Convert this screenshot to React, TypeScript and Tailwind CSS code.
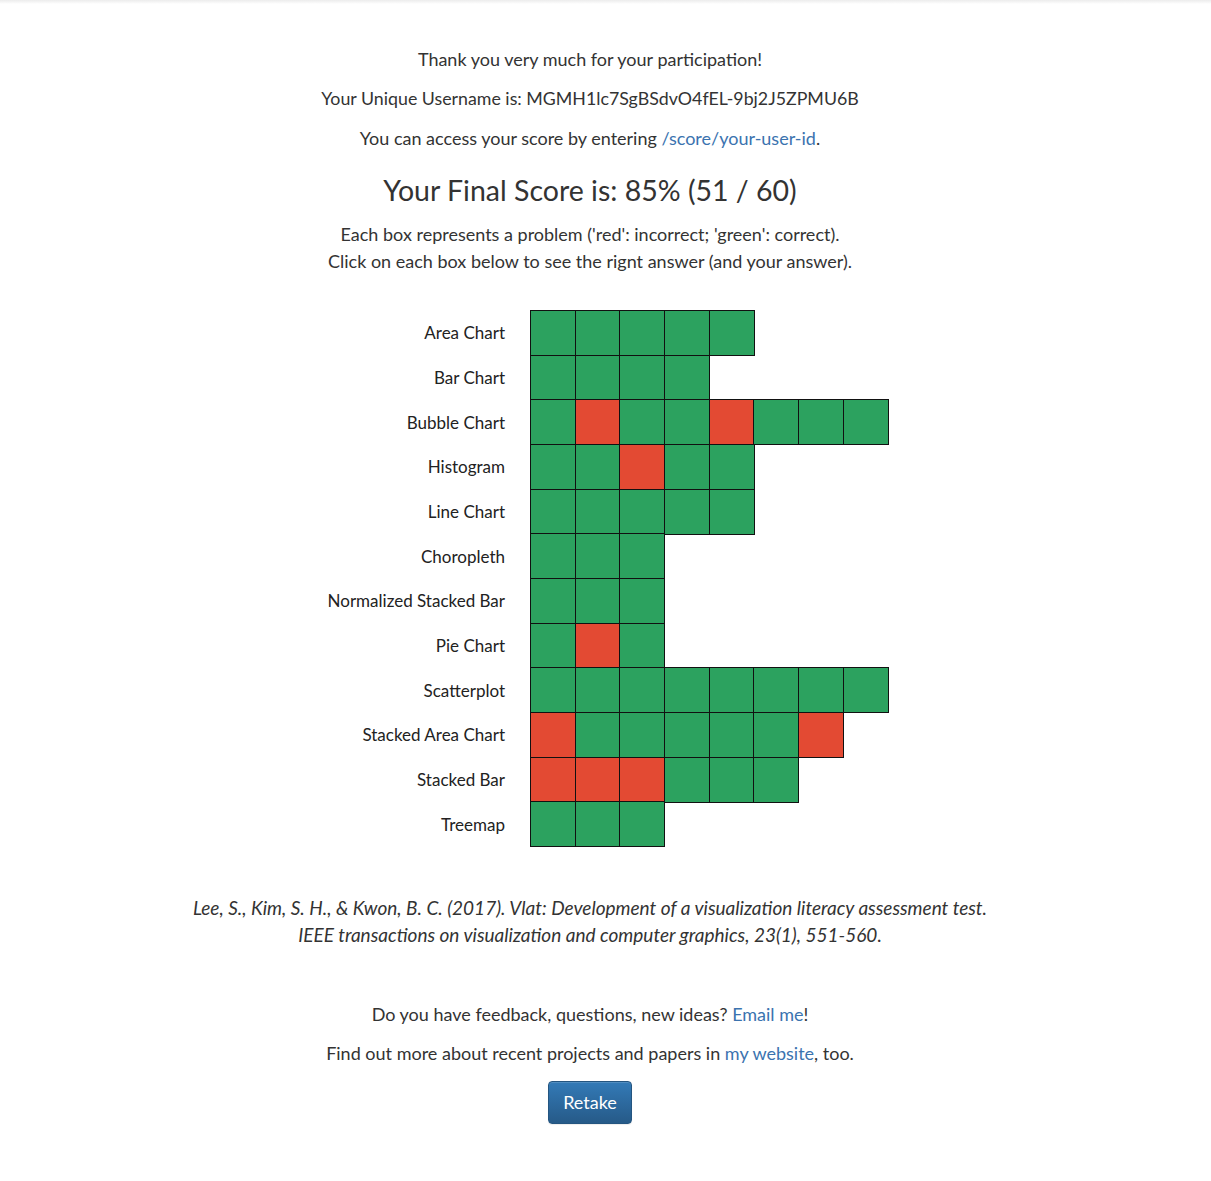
import React from "react";

type Cell = "G" | "R";

const rows: { label: string; cells: Cell[] }[] = [
  { label: "Area Chart", cells: ["G", "G", "G", "G", "G"] },
  { label: "Bar Chart", cells: ["G", "G", "G", "G"] },
  { label: "Bubble Chart", cells: ["G", "R", "G", "G", "R", "G", "G", "G"] },
  { label: "Histogram", cells: ["G", "G", "R", "G", "G"] },
  { label: "Line Chart", cells: ["G", "G", "G", "G", "G"] },
  { label: "Choropleth", cells: ["G", "G", "G"] },
  { label: "Normalized Stacked Bar", cells: ["G", "G", "G"] },
  { label: "Pie Chart", cells: ["G", "R", "G"] },
  { label: "Scatterplot", cells: ["G", "G", "G", "G", "G", "G", "G", "G"] },
  { label: "Stacked Area Chart", cells: ["R", "G", "G", "G", "G", "G", "R"] },
  { label: "Stacked Bar", cells: ["R", "R", "R", "G", "G", "G"] },
  { label: "Treemap", cells: ["G", "G", "G"] },
];

export default function App() {
  return (
    <div
      className="min-h-[1181px] bg-white text-[#333] text-[18px]"
      style={{ fontFamily: "Lato, 'Liberation Sans', sans-serif" }}
    >
      <div className="h-[4px] bg-gradient-to-b from-[#ececec] to-white" />
      <div className="w-[1180px] text-center">
        {/* Intro */}
        <div className="pt-[40px] leading-[30px]">
          <p className="mb-[9px]">Thank you very much for your participation!</p>
          <p className="mb-[10px] text-[17.8px]">
            Your Unique Username is: MGMH1lc7SgBSdvO4fEL-9bj2J5ZPMU6B
          </p>
          <p>
            You can access your score by entering{" "}
            <a className="text-[#3b73af]" href="#">
              /score/your-user-id
            </a>
            .
          </p>
        </div>

        <h2 className="mt-[21px] text-[28.5px] leading-[32px]">
          Your Final Score is: 85% (51 / 60)
        </h2>

        <p className="mt-[15px] leading-[27px]">
          Each box represents a problem ('red': incorrect; 'green': correct).
          <br />
          Click on each box below to see the rignt answer (and your answer).
        </p>

        {/* Score grid */}
        <div className="mt-[35px] ml-[320px] flex flex-col text-left">
          {rows.map((row, i) => (
            <div key={row.label} className={`flex items-center ${i > 0 ? "-mt-[1.5px]" : ""}`}>
              <div className="w-[186px] pr-px text-right text-[17px] text-[#222]">
                {row.label}
              </div>
              <div className="ml-[24px] flex">
                {row.cells.map((c, j) => (
                  <div
                    key={j}
                    className={`h-[46.17px] w-[46.17px] border-[1.5px] border-[#111] cursor-pointer ${
                      j > 0 ? "-ml-[1.5px]" : ""
                    } ${c === "G" ? "bg-[#2ca25f]" : "bg-[#e34a33]"}`}
                  />
                ))}
              </div>
            </div>
          ))}
        </div>

        {/* Citation */}
        <p className="mt-[47px] italic text-[19px] leading-[27px] text-[#333]">
          Lee, S., Kim, S. H., &amp; Kwon, B. C. (2017). Vlat: Development of a visualization literacy
          assessment test.
          <br />
          IEEE transactions on visualization and computer graphics, 23(1), 551-560.
        </p>

        {/* Feedback */}
        <div className="mt-[51px] leading-[30px]">
          <p className="mb-[9px]">
            Do you have feedback, questions, new ideas?{" "}
            <a className="text-[#3b73af]" href="#">
              Email me
            </a>
            !
          </p>
          <p>
            Find out more about recent projects and papers in{" "}
            <a className="text-[#3b73af]" href="#">
              my website
            </a>
            , too.
          </p>
        </div>

        <button className="mt-[13px] h-[43px] w-[84px] rounded-[4px] border border-[#245580] bg-gradient-to-b from-[#337ab7] to-[#265a88] text-[18px] text-white shadow-[inset_0_1px_0_rgba(255,255,255,0.15),0_1px_1px_rgba(0,0,0,0.075)]">
          Retake
        </button>
      </div>
    </div>
  );
}
